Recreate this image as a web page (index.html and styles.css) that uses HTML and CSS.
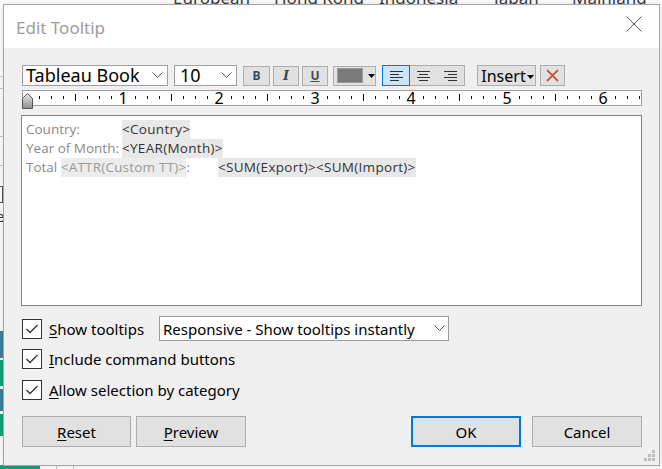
FILE: index.html
```html
<!DOCTYPE html>
<html>
<head>
<meta charset="utf-8">
<link rel="stylesheet" href="styles.css">
</head>
<body>
<div class="desk">
  <div class="bg-top"><span></span><span>European</span><span>Hong Kong</span><span>Indonesia</span><span>Japan</span><span>Mainland</span></div>
  <div class="bg-mid">
    <div class="bg-left">
      <div class="bl-line l1"></div>
      <div class="bl-line l2"></div>
      <div class="bl-line l3"></div>
      <div class="bl-line l4"></div>
      <div class="bl-box"></div>
      <div class="bl-e">e</div>
      <div class="bl-blue b1"></div>
      <div class="bl-green g1"></div>
      <div class="bl-blue b2"></div>
      <div class="bl-green g2"></div>
    </div>
  </div>
  <div class="bg-bottom"><div class="bb-green"></div><div class="bb-line"></div><div class="bb-line"></div></div>

  <div class="dialog">
    <div class="titlebar">
      <span class="title">Edit Tooltip</span>
      <svg class="close" width="16" height="16" viewBox="0 0 16 16"><path d="M0.5 0.5 L15.5 15.5 M15.5 0.5 L0.5 15.5" stroke="#5a5a5a" stroke-width="1" fill="none"/></svg>
    </div>
    <div class="content">
      <div class="toolbar">
        <div class="combo font-combo"><span>Tableau Book</span><svg class="chev" width="11" height="6" viewBox="0 0 11 6"><path d="M0.5 0.5 L5.5 5.5 L10.5 0.5" stroke="#555" fill="none"/></svg></div>
        <div class="combo size-combo"><span>10</span><svg class="chev" width="11" height="6" viewBox="0 0 11 6"><path d="M0.5 0.5 L5.5 5.5 L10.5 0.5" stroke="#555" fill="none"/></svg></div>
        <div class="tbtn bold">B</div>
        <div class="tbtn ital">I</div>
        <div class="tbtn under">U</div>
        <div class="tbtn colorbtn"><span class="swatch"></span><svg width="7" height="4" viewBox="0 0 7 4"><path d="M0 0 H7 L3.5 4 Z" fill="#000"/></svg></div>
        <div class="align-group">
          <div class="aseg active"><svg width="13" height="10" viewBox="0 0 13 10"><path d="M0 0.5 H13 M0 3.5 H9 M0 6.5 H13 M0 9.5 H9" stroke="#333"/></svg></div>
          <div class="aseg"><svg width="13" height="10" viewBox="0 0 13 10"><path d="M0 0.5 H13 M2 3.5 H11 M0 6.5 H13 M2 9.5 H11" stroke="#333"/></svg></div>
          <div class="aseg"><svg width="13" height="10" viewBox="0 0 13 10"><path d="M0 0.5 H13 M4 3.5 H13 M0 6.5 H13 M4 9.5 H13" stroke="#333"/></svg></div>
        </div>
        <div class="tbtn insert"><span>Insert</span><svg width="7" height="4" viewBox="0 0 7 4"><path d="M0 0 H7 L3.5 4 Z" fill="#000"/></svg></div>
        <div class="tbtn clear"><svg width="13" height="13" viewBox="0 0 13 13"><path d="M1 1 L12 12 M12 1 L1 12" stroke="#c55a3f" stroke-width="1.8" fill="none"/></svg></div>
      </div>

      <div class="ruler">
        <div class="nums"><span>1</span><span>2</span><span>3</span><span>4</span><span>5</span><span>6</span></div>
        <svg class="indent" width="11" height="16" viewBox="0 0 11 16">
          <defs><linearGradient id="ig" x1="0" y1="0" x2="0" y2="1"><stop offset="0" stop-color="#e8e8e8"/><stop offset="1" stop-color="#8c8c8c"/></linearGradient></defs>
          <path d="M5.5 0.5 L10.5 5.5 V15.5 H0.5 V5.5 Z" fill="url(#ig)" stroke="#555"/>
        </svg>
      </div>

      <div class="editor">
        <div class="eline"><span class="lbl w1">Country:</span><span class="fld">&lt;Country&gt;</span></div>
        <div class="eline"><span class="lbl w1">Year of Month:</span><span class="fld">&lt;YEAR(Month)&gt;</span></div>
        <div class="eline"><span class="lbl w2">Total <span class="attr">&lt;ATTR(Custom TT)&gt;</span>:</span><span class="fld">&lt;SUM(Export)&gt;&lt;SUM(Import)&gt;</span></div>
      </div>

      <div class="options">
        <div class="opt-row">
          <span class="cb"><svg width="18" height="18" viewBox="0 0 18 18"><path d="M3.5 9 L7 12.5 L14.5 5" stroke="#333" stroke-width="1.3" fill="none"/></svg></span>
          <span class="opt-label fixed"><u>S</u>how tooltips</span>
          <div class="combo resp-combo"><span>Responsive - Show tooltips instantly</span><svg class="chev" width="11" height="6" viewBox="0 0 11 6"><path d="M0.5 0.5 L5.5 5.5 L10.5 0.5" stroke="#555" fill="none"/></svg></div>
        </div>
        <div class="opt-row">
          <span class="cb"><svg width="18" height="18" viewBox="0 0 18 18"><path d="M3.5 9 L7 12.5 L14.5 5" stroke="#333" stroke-width="1.3" fill="none"/></svg></span>
          <span class="opt-label"><u>I</u>nclude command buttons</span>
        </div>
        <div class="opt-row last">
          <span class="cb"><svg width="18" height="18" viewBox="0 0 18 18"><path d="M3.5 9 L7 12.5 L14.5 5" stroke="#333" stroke-width="1.3" fill="none"/></svg></span>
          <span class="opt-label"><u>A</u>llow selection by category</span>
        </div>
      </div>

      <div class="buttons">
        <div class="btn"><u>R</u>eset</div>
        <div class="btn preview"><u>P</u>review</div>
        <div class="spacer"></div>
        <div class="btn ok">OK</div>
        <div class="btn cancel">Cancel</div>
      </div>
    </div>
    <svg class="grip" width="12" height="12" viewBox="0 0 12 12"><path d="M8 0h3v3h-3z M4 4h3v3h-3z M8 4h3v3h-3z M0 8h3v3h-3z M4 8h3v3h-3z M8 8h3v3h-3z" fill="#bdbdbd"/></svg>
  </div>
</div>
</body>
</html>
```

FILE: styles.css
```css
* { box-sizing: border-box; }
html, body { margin: 0; padding: 0; }
body {
  width: 662px;
  height: 469px;
  overflow: hidden;
  background: #fff;
  font-family: "Noto Sans", "Open Sans", sans-serif;
}
.desk {
  position: relative;
  width: 662px;
  height: 469px;
  display: flex;
  flex-direction: column;
}

/* background app */
.bg-top {
  height: 4px;
  overflow: hidden;
  display: grid;
  grid-template-columns: 173px 101px 105px 115px 78px auto;
  font-size: 17px;
  line-height: 20px;
  color: #3a3a3a;
}
.bg-top span { margin-top: -12px; }
.bg-mid { flex: 1; display: flex; }
.bg-left {
  width: 3px;
  display: flex;
  flex-direction: column;
}
.bl-line { border-top: 1px solid #c8c8c8; }
.l1 { margin-top: 72px; }
.l2 { margin-top: 11px; }
.l3 { margin-top: 47px; }
.l4 { margin-top: 28px; }
.bl-box { margin-top: 20px; height: 17px; border: 1px solid #555; border-left: none; width: 3px; }
.bl-e { margin-top: 6px; margin-left: -4px; font-size: 15px; line-height: 14px; color: #333; }
.bl-blue { background: #3f7f9b; }
.bl-green { background: #14a37b; }
.b1 { margin-top: 108px; height: 27px; }
.g1 { margin-top: 2px; height: 26px; }
.b2 { margin-top: 3px; height: 22px; }
.g2 { margin-top: 3px; height: 22px; }
.bg-bottom { height: 4px; display: flex; }
.bb-green { width: 40px; background: #14a37b; }
.bb-line { width: 1px; margin-left: 16px; background: #c8c8c8; }

/* dialog window */
.dialog {
  position: absolute;
  left: 3px;
  top: 4px;
  width: 657px;
  height: 462px;
  border: 1px solid #a6a6a6;
  background: #f0f0f0;
  box-shadow: 0 0 6px rgba(0,0,0,0.15);
}
.titlebar {
  height: 43px;
  background: #fff;
  display: flex;
  align-items: center;
  padding-left: 12px;
  padding-right: 17px;
}
.title {
  font-size: 17px;
  color: #9c9c9c;
  flex: 1;
  margin-top: 1px;
}
.close { margin-top: -5px; }

.content {
  padding: 17px 17px 0 18px;
}

/* toolbar */
.toolbar {
  display: flex;
  align-items: center;
  height: 21px;
}
.combo {
  display: flex;
  align-items: center;
  height: 21px;
  background: #fff;
  border: 1px solid #a0a0a0;
  color: #000;
}
.combo span { flex: 1; white-space: nowrap; }
.font-combo { width: 146px; font-size: 18px; padding: 0 4px 0 3px; }
.size-combo { width: 63px; margin-left: 6px; font-size: 18px; padding: 0 4px 0 5px; }
.font-combo span, .size-combo span { line-height: 19px; }
.chev { margin-bottom: 2px; }
.tbtn {
  height: 20px;
  background: #e1e1e1;
  border: 1px solid #adadad;
  display: flex;
  align-items: center;
  justify-content: center;
  color: #3b4857;
}
.bold { width: 27px; margin-left: 6px; font-weight: 700; font-size: 12px; }
.ital { width: 26px; margin-left: 3px; font-family: "DejaVu Serif", serif; font-style: italic; font-weight: 700; font-size: 13px; }
.under { width: 26px; margin-left: 3px; font-weight: 700; font-size: 12px; text-decoration: underline; text-underline-offset: 1px; }
.colorbtn { width: 43px; margin-left: 5px; justify-content: flex-start; padding-left: 3px; }
.swatch { width: 26px; height: 15px; background: #7b7b7b; border: 1px solid #9a9a9a; margin-right: 5px; }
.align-group {
  display: flex;
  margin-left: 6px;
  height: 21px;
  border: 1px solid #adadad;
  background: #e1e1e1;
}
.aseg {
  width: 27px;
  display: flex;
  align-items: center;
  justify-content: center;
}
.aseg.active {
  background: #cce4f7;
  border: 1px solid #0078d7;
  margin: -1px 0 -1px -1px;
  width: 28px;
}
.insert {
  width: 59px;
  height: 21px;
  margin-left: 12px;
  font-size: 16px;
  color: #000;
  gap: 1px;
  padding-left: 2px;
}
.insert svg { margin-top: 2px; }
.clear { width: 25px; height: 21px; margin-left: 4px; }

/* ruler */
.ruler {
  position: relative;
  margin-top: 4px;
  height: 16px;
  background-color: #fff;
  border: 1px solid #a0a0a0;
  background-image:
    repeating-linear-gradient(to right, #000 0 1px, transparent 1px 96px),
    repeating-linear-gradient(to right, #000 0 1px, transparent 1px 12px);
  background-size: 100% 7px, 100% 3px;
  background-position: 52px 3px, 16px 5px;
  background-repeat: no-repeat;
}
.nums {
  display: flex;
  gap: 84px;
  padding-left: 94px;
}
.nums span {
  width: 12px;
  height: 14px;
  background: #fff;
  font-size: 16px;
  line-height: 14px;
  text-align: center;
  color: #000;
}
.indent { position: absolute; left: -1px; top: 2px; }

/* editor */
.editor {
  margin-top: 9px;
  margin-left: -1px;
  height: 191px;
  background: #fff;
  border: 1px solid #848484;
  padding: 4px 4px;
  font-family: "Open Sans", "Noto Sans", sans-serif;
  font-size: 13.5px;
  line-height: 19px;
  color: #8a8a8a;
}
.eline { display: flex; height: 19px; white-space: pre; }
.lbl { display: inline-block; }
.w1 { min-width: 96px; }
.w2 { min-width: 192px; }
.fld { display: inline-block; background: #e8e8e8; color: #333; letter-spacing: 0.3px; }
.attr { display: inline-block; background: #ececec; color: #9a9a9a; letter-spacing: 0.2px; }

/* options */
.options { margin-top: 10px; }
.opt-row {
  display: flex;
  align-items: center;
  height: 25px;
  font-size: 15px;
  color: #000;
}
.opt-row + .opt-row { margin-top: 5px; }
.opt-row.last { margin-top: 6px; }
.cb {
  width: 20px;
  height: 20px;
  border: 1px solid #333;
  background: #fff;
  display: flex;
  align-items: center;
  justify-content: center;
}
.opt-label { margin-left: 7px; white-space: nowrap; }
.opt-label.fixed { width: 110px; }
.opt-label u, .btn u { text-underline-offset: 2px; }
.resp-combo {
  width: 290px;
  height: 25px;
  font-size: 15px;
  padding: 0 3px 0 3px;
  border-color: #9a9a9a;
}

/* buttons */
.buttons {
  display: flex;
  margin-top: 14px;
}
.btn {
  width: 109px;
  height: 31px;
  background: #e1e1e1;
  border: 1px solid #adadad;
  display: flex;
  align-items: center;
  justify-content: center;
  font-size: 15px;
  color: #000;
}
.preview { width: 110px; margin-left: 5px; }
.spacer { flex: 1; }
.ok { width: 110px; border: 2px solid #0078d7; }
.cancel { width: 110px; margin-left: 11px; }
.grip { position: absolute; right: 3px; bottom: 3px; }
```
